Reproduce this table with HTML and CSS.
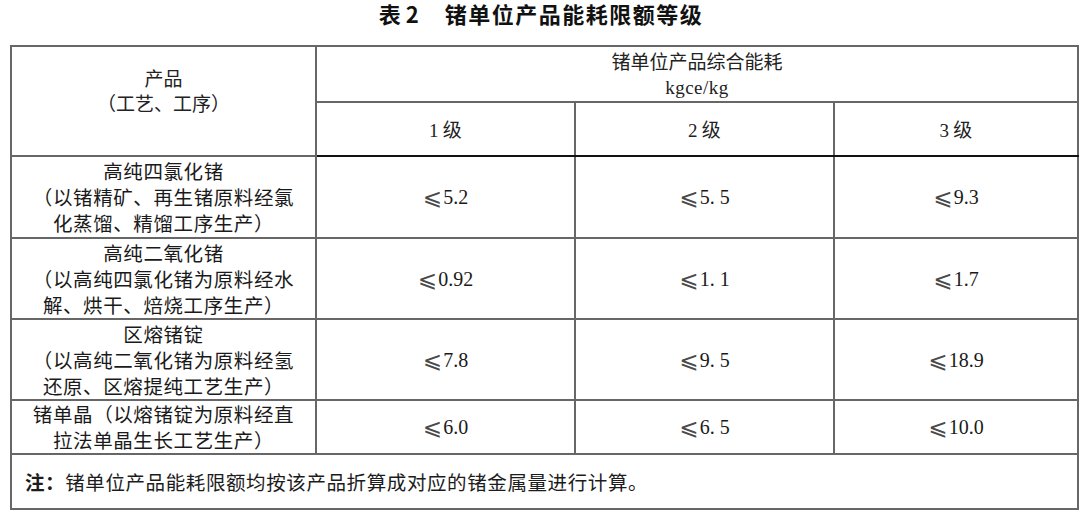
FILE: index.html
```html
<!DOCTYPE html>
<html lang="zh">
<head>
<meta charset="utf-8">
<title>表2 锗单位产品能耗限额等级</title>
<link rel="stylesheet" href="styles.css">
</head>
<body>
<div class="page">
  <h1 class="title"><span class="tno">表 2</span><span class="tname">锗单位产品能耗限额等级</span></h1>
  <table class="grid">
    <colgroup>
      <col class="c0"><col class="c1"><col class="c2"><col class="c3">
    </colgroup>
    <thead>
      <tr class="h1">
        <th rowspan="2" class="hprod">产品<br>（工艺、工序）</th>
        <th colspan="3" class="hgroup">锗单位产品综合能耗<br><span class="unit">kgce/kg</span></th>
      </tr>
      <tr class="h2">
        <th class="lvl"><span class="num">1</span> 级</th>
        <th class="lvl"><span class="num">2</span> 级</th>
        <th class="lvl"><span class="num">3</span> 级</th>
      </tr>
    </thead>
    <tbody>
      <tr class="r3">
        <td class="prod">高纯四氯化锗<br>（以锗精矿、再生锗原料经氯<br>化蒸馏、精馏工序生产）</td>
        <td class="val"><span class="le">⩽</span>5.2</td>
        <td class="val"><span class="le">⩽</span>5. 5</td>
        <td class="val"><span class="le">⩽</span>9.3</td>
      </tr>
      <tr class="r3b">
        <td class="prod">高纯二氧化锗<br>（以高纯四氯化锗为原料经水<br>解、烘干、焙烧工序生产）</td>
        <td class="val"><span class="le">⩽</span>0.92</td>
        <td class="val"><span class="le">⩽</span>1. 1</td>
        <td class="val"><span class="le">⩽</span>1.7</td>
      </tr>
      <tr class="r3b">
        <td class="prod">区熔锗锭<br>（以高纯二氧化锗为原料经氢<br>还原、区熔提纯工艺生产）</td>
        <td class="val"><span class="le">⩽</span>7.8</td>
        <td class="val"><span class="le">⩽</span>9. 5</td>
        <td class="val"><span class="le">⩽</span>18.9</td>
      </tr>
      <tr class="r2">
        <td class="prod">锗单晶（以熔锗锭为原料经直<br>拉法单晶生长工艺生产）</td>
        <td class="val"><span class="le">⩽</span>6.0</td>
        <td class="val"><span class="le">⩽</span>6. 5</td>
        <td class="val"><span class="le">⩽</span>10.0</td>
      </tr>
      <tr class="note">
        <td colspan="4" class="notecell"><strong class="notelabel">注：</strong>锗单位产品能耗限额均按该产品折算成对应的锗金属量进行计算。</td>
      </tr>
    </tbody>
  </table>
</div>
</body>
</html>
```

FILE: styles.css
```css
html, body {
  margin: 0;
  padding: 0;
  background: #ffffff;
}

body {
  font-family: "Noto Sans CJK SC", "Noto Sans", sans-serif;
  color: #1c1c1c;
}

.page {
  width: 1080px;
  height: 511px;
  overflow: hidden;
}

.title {
  margin: 0;
  height: 45px;
  box-sizing: border-box;
  padding-top: 0;
  padding-left: 2px;
  display: flex;
  justify-content: center;
  align-items: flex-start;
  font-size: 22px;
  line-height: 26px;
  font-weight: 700;
  color: #111;
}

.tno {
  margin-right: 26px;
}

.tname {
  letter-spacing: 1.5px;
}

.grid {
  margin-left: 10px;
  width: 1067px;
  table-layout: fixed;
  border-collapse: collapse;
  border: 2px solid #111;
  font-size: 19.5px;
}

.c0 { width: 305px; }
.c1 { width: 259px; }
.c2 { width: 259px; }
.c3 { width: 244px; }

.grid th,
.grid td {
  border: 2px solid #676767;
  padding: 0;
  text-align: center;
  vertical-align: middle;
  font-weight: 400;
}

.grid th {
  font-size: 19px;
  line-height: 25px;
  color: #222;
}

.grid thead tr:last-child th,
.hprod {
  border-bottom: 2px solid #111;
}

.h1 { height: 56px; }
.h2 { height: 54px; }

.hgroup {
  line-height: 25px;
}

.unit,
.num,
.val {
  font-family: "Liberation Serif", serif;
}

.unit {
  font-size: 19px;
  letter-spacing: 0.5px;
}

.lvl {
  font-size: 19px;
}

.hprod {
  padding-bottom: 22px !important;
}

.prod {
  line-height: 26px;
  letter-spacing: 0.6px;
  color: #1a1a1a;
}

.val {
  font-size: 20px;
  line-height: 24px;
  color: #1a1a1a;
}

.le {
  font-family: "DejaVu Sans", "Noto Sans CJK SC", sans-serif;
  font-size: 23px;
  line-height: 20px;
  margin-right: 1px;
  vertical-align: -1px;
  color: #4a4a4a;
}

.r3 { height: 82px; }
.r3b { height: 81px; }
.r2 { height: 53px; }
.note { height: 55px; }

.notecell {
  text-align: left !important;
  padding-left: 13px !important;
  font-size: 19.5px;
  letter-spacing: 0.6px;
  border-top: 2px solid #676767;
}

.notelabel {
  font-weight: 700;
}
```
